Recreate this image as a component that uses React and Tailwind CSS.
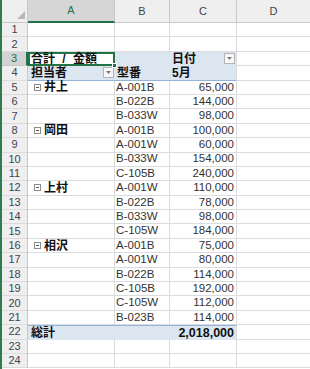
import React from "react";

const rows = [
  { n: 1 }, { n: 2 },
  { n: 3, kind: "h1" }, { n: 4, kind: "h2" },
  { n: 5, a: "井上", b: "A-001B", c: "65,000" },
  { n: 6, b: "B-022B", c: "144,000" },
  { n: 7, b: "B-033W", c: "98,000" },
  { n: 8, a: "岡田", b: "A-001B", c: "100,000" },
  { n: 9, b: "A-001W", c: "60,000" },
  { n: 10, b: "B-033W", c: "154,000" },
  { n: 11, b: "C-105B", c: "240,000" },
  { n: 12, a: "上村", b: "A-001W", c: "110,000" },
  { n: 13, b: "B-022B", c: "78,000" },
  { n: 14, b: "B-033W", c: "98,000" },
  { n: 15, b: "C-105W", c: "184,000" },
  { n: 16, a: "相沢", b: "A-001B", c: "75,000" },
  { n: 17, b: "A-001W", c: "80,000" },
  { n: 18, b: "B-022B", c: "114,000" },
  { n: 19, b: "C-105B", c: "192,000" },
  { n: 20, b: "C-105W", c: "112,000" },
  { n: 21, b: "B-023B", c: "114,000" },
  { n: 22, kind: "total" },
  { n: 23 }, { n: 24 },
];

function Dropdown() {
  return (
    <div className="w-[11px] h-[11px] border border-[#b5b5b5] bg-[#f7f7f7] flex items-center justify-center">
      <svg width="5" height="3" viewBox="0 0 5 3">
        <path d="M0 0 H5 L2.5 3 Z" fill="#7a7a7a" />
      </svg>
    </div>
  );
}

function Collapse() {
  return (
    <div className="w-[7px] h-[7px] border border-[#8a8a8a] bg-white flex items-center justify-center mr-[3px]">
      <div className="w-[3px] h-[1px] bg-[#555]" />
    </div>
  );
}

function RowHeader({ n, selected }) {
  return (
    <div
      className={
        selected
          ? "w-[26px] shrink-0 flex items-center justify-center bg-[#d3d3d3] border-r-2 border-r-[#217346] border-b border-b-[#c8c8c8] text-[#217346] text-[11px]"
          : "w-[26px] shrink-0 flex items-center justify-center bg-[#efefef] border-r border-r-[#c8c8c8] border-b border-b-[#dcdcdc] text-[#3d4552] text-[11px]"
      }
    >
      {n}
    </div>
  );
}

function Row({ r }) {
  const grid = "border-r border-b border-[#dadcdd]";
  if (r.kind === "h1") {
    return (
      <div className="flex h-[14.4px]">
        <RowHeader n={r.n} selected />
        <div className="relative w-[87px] shrink-0 border-2 border-[#217346] bg-white flex items-center pl-[1px] text-[12px] font-bold text-[#111] whitespace-pre [word-spacing:4px]">
          合計 / 金額
          <div className="absolute right-[-4px] bottom-[-4px] w-[5px] h-[5px] bg-[#217346] border border-white" />
        </div>
        <div className="w-[55px] shrink-0 bg-[#dce6f1]" />
        <div className="w-[67px] shrink-0 bg-[#dce6f1] border-r border-[#dadcdd] flex items-center justify-between pl-[2px] pr-[1px] text-[12px] font-bold text-[#111]">
          <span>日付</span>
          <Dropdown />
        </div>
        <div className="flex-1 border-b border-[#dadcdd]" />
      </div>
    );
  }
  if (r.kind === "h2") {
    return (
      <div className="flex h-[14.4px]">
        <RowHeader n={r.n} />
        <div className="w-[87px] shrink-0 bg-[#dce6f1] border-b border-[#95b3d7] flex items-center justify-between pl-[3px] pr-[1px] text-[12px] font-bold text-[#111]">
          <span>担当者</span>
          <Dropdown />
        </div>
        <div className="w-[55px] shrink-0 bg-[#dce6f1] border-b border-[#95b3d7] flex items-center pl-[2px] text-[12px] font-bold text-[#111]">
          型番
        </div>
        <div className="w-[67px] shrink-0 bg-[#dce6f1] border-b border-[#95b3d7] border-r border-r-[#dadcdd] flex items-center pl-[2px] text-[12px] font-bold text-[#111]">
          5月
        </div>
        <div className="flex-1 border-b border-[#dadcdd]" />
      </div>
    );
  }
  if (r.kind === "total") {
    return (
      <div className="flex h-[14.4px]">
        <RowHeader n={r.n} />
        <div className="w-[87px] shrink-0 bg-[#dce6f1] border-t border-[#95b3d7] flex items-center pl-[3px] text-[12px] font-bold text-[#111]">
          総計
        </div>
        <div className="w-[55px] shrink-0 bg-[#dce6f1] border-t border-[#95b3d7]" />
        <div className="w-[67px] shrink-0 bg-[#dce6f1] border-t border-[#95b3d7] border-r border-r-[#dadcdd] flex items-center justify-end pr-[2px] text-[12.5px] font-bold text-[#111]">
          2,018,000
        </div>
        <div className="flex-1 border-b border-[#dadcdd]" />
      </div>
    );
  }
  return (
    <div className="flex h-[14.4px]">
      <RowHeader n={r.n} />
      <div className={`w-[87px] shrink-0 ${grid} flex items-center pl-[6px] text-[12px] font-bold text-[#111]`}>
        {r.a && (
          <>
            <Collapse />
            <span>{r.a}</span>
          </>
        )}
      </div>
      <div className={`w-[55px] shrink-0 ${grid} flex items-center pl-[1px] text-[11.5px] text-[#333]`}>
        {r.b}
      </div>
      <div className={`w-[67px] shrink-0 ${grid} flex items-center justify-end pr-[2px] text-[11.5px] text-[#333]`}>
        {r.c}
      </div>
      <div className="flex-1 border-b border-[#dadcdd]" />
    </div>
  );
}

export default function App() {
  return (
    <div
      className="w-[310px] h-[369px] overflow-hidden bg-white flex leading-none"
      style={{ fontFamily: "'Liberation Sans','Noto Sans CJK JP',sans-serif" }}
    >
      <div className="w-[2px] shrink-0 bg-[#2f7d4f]" />
      <div className="flex-1 flex flex-col">
        <div className="flex h-[23px] shrink-0 bg-[#efefef] text-[11px] text-[#444]">
          <div className="w-[26px] shrink-0 border-r border-b border-[#c8c8c8] flex items-end justify-end pr-[2px] pb-[3px]">
            <svg width="8" height="8" viewBox="0 0 8 8">
              <path d="M8 0 V8 H0 Z" fill="#b8b8b8" />
            </svg>
          </div>
          <div className="w-[87px] shrink-0 bg-[#d6d6d6] border-r border-[#c8c8c8] border-b-2 border-b-[#217346] flex items-center justify-center text-[#217346]">
            A
          </div>
          <div className="w-[55px] shrink-0 border-r border-b border-[#c8c8c8] flex items-center justify-center">
            B
          </div>
          <div className="w-[67px] shrink-0 border-r border-b border-[#c8c8c8] flex items-center justify-center">
            C
          </div>
          <div className="flex-1 border-b border-[#c8c8c8] flex items-center justify-center">
            D
          </div>
        </div>
        {rows.map((r) => (
          <Row key={r.n} r={r} />
        ))}
      </div>
    </div>
  );
}
